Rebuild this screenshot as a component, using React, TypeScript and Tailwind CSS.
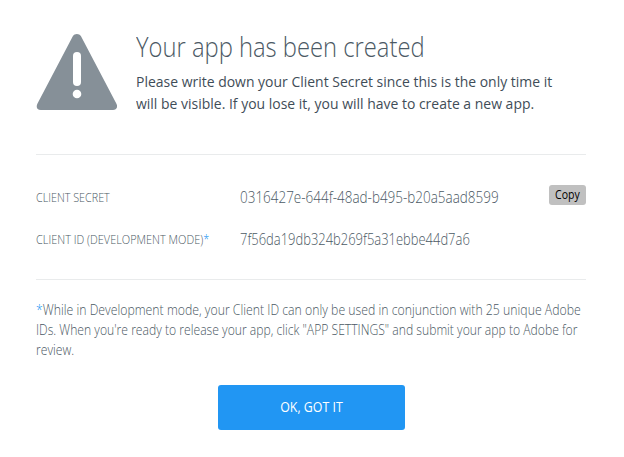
export default function App() {
  return (
    <main className="h-[457px] w-[624px] overflow-hidden bg-white px-9 pt-[30px] font-['Open_Sans',sans-serif] text-[#4b5964]">
      <header className="flex h-[124px] gap-[19px]">
        <svg className="mt-1 h-[76px] w-[81px] shrink-0" viewBox="0 0 81 76">
          <path
            d="M36.8 2.2C38.6-.7 43.2-.7 45 2.2L80.3 69.5C82.2 73 80.6 76 77 76H4.7C1.1 76-.3 73 1.5 69.5Z"
            fill="#869098"
          />
          <rect x="37" y="18" width="8" height="34" rx="4" fill="white" />
          <circle cx="41" cy="60" r="4.3" fill="white" />
        </svg>
        <div className="whitespace-nowrap">
          <h1 className="origin-left scale-x-[0.88] text-[27px] leading-[34px] font-light">Your app has been created</h1>
          <p className="mt-[6px] w-max origin-left scale-x-[0.931] text-[15px] leading-[22px] text-[#3f4d58]">
            Please write down your Client Secret since this is the only time it
            <br />
            will be visible. If you lose it, you will have to create a new app.
          </p>
        </div>
      </header>
      <section className="mr-[2px] h-[126px] border-y border-[#e9ebec] pt-[30px]">
        <div className="flex h-6 items-center">
          <span className="mt-[2px] w-[204px] origin-left scale-x-90 text-[12px] font-light">CLIENT SECRET</span>
          <span className="origin-left scale-x-[0.842] text-[16px] font-light">0316427e-644f-48ad-b495-b20a5aad8599</span>
          <button className="mb-1 ml-auto h-5 w-[37px] rounded-[3px] bg-[#c0c0c0] text-[12px] text-black">
            <span className="block scale-x-[0.88]">Copy</span>
          </button>
        </div>
        <div className="mt-[18px] flex h-6 items-center">
          <span className="mt-[2px] w-[204px] origin-left scale-x-[0.913] text-[12px] font-light">
            CLIENT ID (DEVELOPMENT MODE)<span className="text-[#2196f3]">*</span>
          </span>
          <span className="origin-left scale-x-[0.81] text-[16px] font-light">7f56da19db324b269f5a31ebbe44d7a6</span>
        </div>
      </section>
      <div className="mt-5 text-[14px] leading-5 font-light whitespace-nowrap">
        <p className="origin-left scale-x-[0.877]">
          <span className="text-[#2196f3]">*</span>While in Development mode, your Client ID can only be used in conjunction with 25 unique Adobe
        </p>
        <p className="origin-left scale-x-[0.868]">
          IDs. When you're ready to release your app, click "APP SETTINGS" and submit your app to Adobe for
        </p>
        <p className="origin-left scale-x-[0.87]">review.</p>
      </div>
      <button className="mt-[25px] ml-[182px] block h-[45px] w-[187px] rounded-[3px] bg-[#2196f3] pb-[2px] text-[14px] text-white">
        <span className="block scale-x-[0.885]">OK, GOT IT</span>
      </button>
    </main>
  )
}
